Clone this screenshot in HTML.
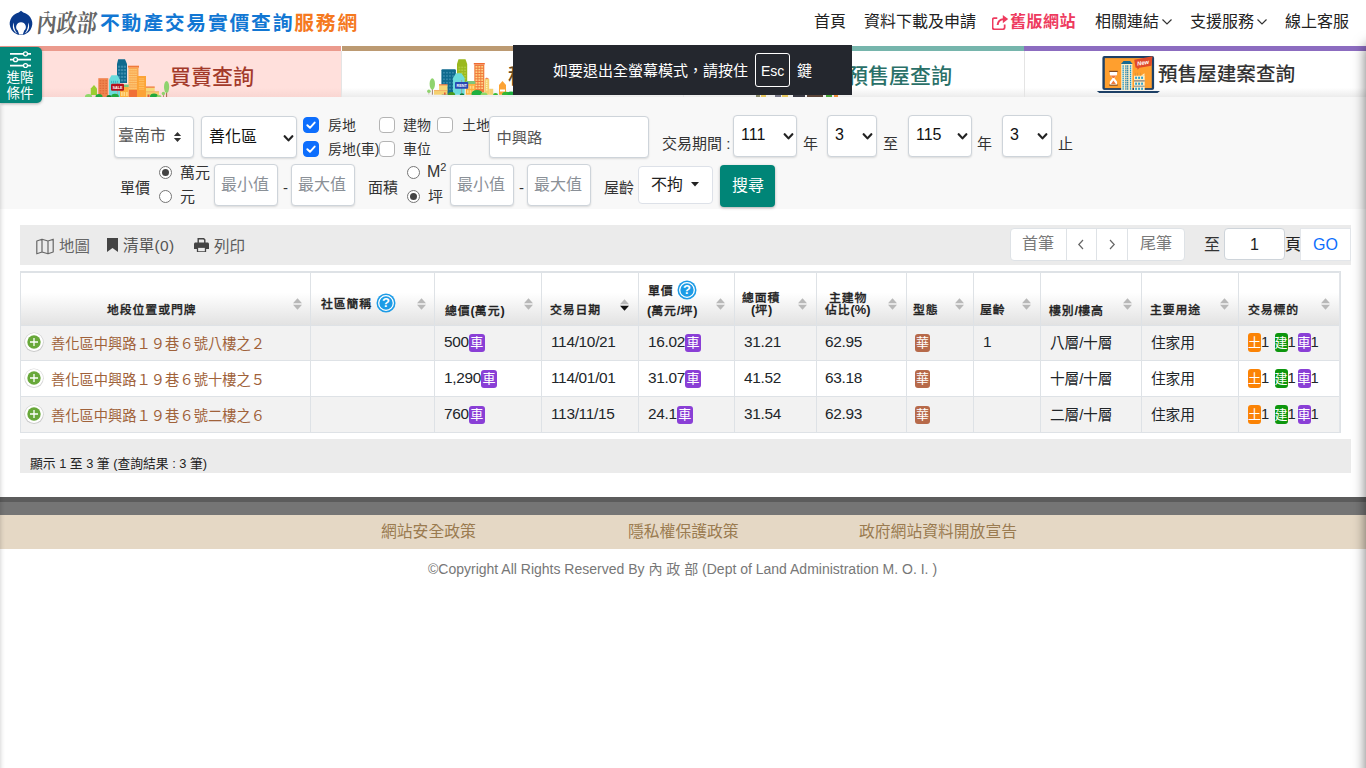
<!DOCTYPE html>
<html lang="zh-Hant">
<head>
<meta charset="utf-8">
<title>內政部不動產交易實價查詢服務網</title>
<style>
*{box-sizing:border-box;margin:0;padding:0}
html,body{width:1366px;height:768px;overflow:hidden;background:#fff}
body{font-family:"Liberation Sans","Noto Sans CJK TC",sans-serif;font-size:16px;color:#212529;position:relative}
.abs{position:absolute}
.t{position:absolute;white-space:nowrap;line-height:1}
/* header */
#hdr{position:absolute;left:0;top:0;width:1366px;height:45px;background:#fff}
#title{left:100px;top:14.400px;font-size:19.800px;font-weight:bold;color:#1277d3;letter-spacing:1.800px}
#title b{color:#f5791f;font-weight:700}
#moi{left:37px;top:12.500px;font-family:"Liberation Serif","Noto Serif CJK TC","Noto Serif CJK SC",serif;font-size:20px;color:#666;font-weight:700;letter-spacing:0;transform:skewX(-6deg) scaleY(1.25);transform-origin:0 50%}
.nav{top:14px;font-size:16px;color:#222}
/* tabs */
.tab{position:absolute;top:46px;height:51px;border-top:5px solid #000;background:linear-gradient(#fff 0,#fff 80%,#ececec 100%)}
.tab .lbl{position:absolute;white-space:nowrap;line-height:1;font-size:21px;font-weight:500}
/* form */
#formbg{position:absolute;left:0;top:97px;width:1366px;height:111.500px;background:#f8f8f8}
.ctl{position:absolute;background:#fff;border:1px solid #ced4da;border-radius:4px;box-shadow:0 1px 2px rgba(0,0,0,.12)}
.ph{position:absolute;white-space:nowrap;line-height:1;color:#8a9097;font-size:16px}
.lab{position:absolute;white-space:nowrap;line-height:1;font-size:15px;color:#333}
.cb{position:absolute;width:16px;height:16px;border-radius:4px;border:1px solid #b4b4b4;background:#fff}
.cb.on{background:#0d6efd;border-color:#0d6efd}
.rd{position:absolute;width:13px;height:13px;border-radius:50%;border:1px solid #767676;background:#fff}
.rd.on::after{content:"";position:absolute;left:2px;top:2px;width:7px;height:7px;border-radius:50%;background:#444}
/* toolbar */
#tbar{position:absolute;left:20px;top:225px;width:1331px;height:40px;background:#ebebeb}
/* table */
.th i{font-style:normal;font-size:12.800px;letter-spacing:0;font-weight:bold;-webkit-text-stroke:0}
.th{position:absolute;white-space:nowrap;line-height:1;font-size:11.900px;letter-spacing:.9px;margin-top:.5px;font-weight:500;-webkit-text-stroke:.3px #222;color:#222}
.td{position:absolute;white-space:nowrap;line-height:1;font-size:14.720px;letter-spacing:-.15px;color:#212529}
.td.num{font-size:15.400px;letter-spacing:-.3px;margin-top:-.6px}
.td.num .bdg{top:-.4px}
.vl{position:absolute;top:272px;width:1px;height:160px;background:#dee2e6}
.bdg{display:inline-block;position:relative;top:-1px;color:#fff;font-size:13px;letter-spacing:0;line-height:18px;height:18px;width:16px;text-align:center;border-radius:3px;vertical-align:0}
.bdg.nb{width:13px;height:19px;line-height:19px;top:-1px;vertical-align:-1px}
</style>
</head>
<body>
<div id="hdr"></div>
<svg class="abs" style="left:8px;top:9px" width="26" height="28" viewBox="8 9 26 28"><path d="M21 10.800 23.300 12.600A11.300 11.300 0 1 1 18.700 12.600z" fill="#0a3a8c"/><path d="M13.800 22.500C11.600 27 13.500 31.500 17.200 33.600 14.800 30.500 13.600 27 13.800 22.500zM28.200 22.500C30.400 27 28.500 31.500 24.800 33.600 27.200 30.500 28.400 27 28.200 22.500z" fill="#fff"/><path d="M21 22.200a4.800 4.800 0 0 1 3.200 8.400L22.800 34.600H19.200L17.800 30.600A4.800 4.800 0 0 1 21 22.200z" fill="#fff"/><path d="M15 33.200 17.500 35.500 14 35.500zM27 33.200 24.500 35.500 28 35.500z" fill="#fff"/></svg>
<div id="moi" class="t">內政部</div>
<div id="title" class="t">不動產交易實價查詢<b>服務網</b></div>
<div class="t nav" style="left:814px">首頁</div>
<div class="t nav" style="left:864px">資料下載及申請</div>
<svg class="abs" style="left:992px;top:13.500px" width="17" height="16" viewBox="1 0.500 14.500 14.500" preserveAspectRatio="none" fill="none" stroke="#ee3a5e" stroke-width="1.500"><path d="M11.800 10v2.800c0 .9-.6 1.500-1.500 1.500H3c-.9 0-1.500-.6-1.500-1.500V5.800c0-.9.600-1.500 1.500-1.500h2.500"/><path d="M5.800 10.500c.2-3.200 2-5.200 5.200-5.400" stroke-width="1.700"/><path d="M10.200 1.300 14.800 5.100 10.200 8.900z" fill="#ee3a5e" stroke="none"/></svg>
<div class="t nav" style="left:1010px;color:#ee3a5e;font-weight:bold;letter-spacing:.5px">舊版網站</div>
<div class="t nav" style="left:1095px">相關連結</div>
<svg class="abs" style="left:1161px;top:18px" width="12" height="8" viewBox="0 0 12 8" fill="none" stroke="#333" stroke-width="1.200"><path d="M1.500 1.500 6 6 10.500 1.500"/></svg>
<div class="t nav" style="left:1190px">支援服務</div>
<svg class="abs" style="left:1256px;top:18px" width="12" height="8" viewBox="0 0 12 8" fill="none" stroke="#333" stroke-width="1.200"><path d="M1.500 1.500 6 6 10.500 1.500"/></svg>
<div class="t nav" style="left:1285px">線上客服</div>

<!-- tabs -->
<div class="tab" style="left:0;width:341px;border-top-color:#eb9a8d;background:linear-gradient(#ffe0dc 0,#ffe0dc 80%,#f9d6d2 100%)"><div class="lbl" style="left:170px;top:15px;color:#a33a2a">買賣查詢</div></div>
<div class="tab" style="left:342px;width:341px;border-top-color:#bc9a72"><div class="lbl" style="left:166px;top:14px;color:#6b4a1c">租賃查詢</div></div>
<div class="tab" style="left:683px;width:341px;border-top-color:#76b5ac"><div class="lbl" style="left:164px;top:14px;color:#2a7068">預售屋查詢</div></div>
<div class="tab" style="left:1024px;width:342px;border-top-color:#8c6cc0"><div class="lbl" style="left:134px;top:14px;color:#333;font-size:19.600px">預售屋建案查詢</div></div>
<div class="abs" style="left:341px;top:51px;width:1px;height:46px;background:#e4e4e4"></div>
<div class="abs" style="left:683px;top:51px;width:1px;height:46px;background:#e4e4e4"></div>
<div class="abs" style="left:1024px;top:51px;width:1px;height:46px;background:#e4e4e4"></div>
<div id="formbg"></div>
<svg class="abs" style="left:84px;top:56px" width="88" height="41" viewBox="84 56 88 41"><path d="M118.200 59.200h6.800l2 4.700V83h-10V63.900z" fill="#0f6a8e"/><rect x="118.0" y="65.7" width="2.2" height="2.0" fill="#3c8cad"/><rect x="118.0" y="69.1" width="2.2" height="2.0" fill="#3c8cad"/><rect x="118.0" y="72.5" width="2.2" height="2.0" fill="#3c8cad"/><rect x="118.0" y="75.9" width="2.2" height="2.0" fill="#3c8cad"/><rect x="118.0" y="79.3" width="2.2" height="2.0" fill="#3c8cad"/><rect x="120.9" y="65.7" width="2.2" height="2.0" fill="#3c8cad"/><rect x="120.9" y="69.1" width="2.2" height="2.0" fill="#3c8cad"/><rect x="120.9" y="72.5" width="2.2" height="2.0" fill="#3c8cad"/><rect x="120.9" y="75.9" width="2.2" height="2.0" fill="#3c8cad"/><rect x="120.9" y="79.3" width="2.2" height="2.0" fill="#3c8cad"/><rect x="123.8" y="65.7" width="2.2" height="2.0" fill="#3c8cad"/><rect x="123.8" y="69.1" width="2.2" height="2.0" fill="#3c8cad"/><rect x="123.8" y="72.5" width="2.2" height="2.0" fill="#3c8cad"/><rect x="123.8" y="75.9" width="2.2" height="2.0" fill="#3c8cad"/><rect x="123.8" y="79.3" width="2.2" height="2.0" fill="#3c8cad"/><rect x="98.3" y="78.2" width="10.0" height="18.8" fill="#f0844f"/><rect x="99.6" y="80.2" width="1.7" height="1.2" fill="#e06a38"/><rect x="99.6" y="82.7" width="1.7" height="1.2" fill="#e06a38"/><rect x="99.6" y="85.2" width="1.7" height="1.2" fill="#e06a38"/><rect x="99.6" y="87.7" width="1.7" height="1.2" fill="#e06a38"/><rect x="99.6" y="90.2" width="1.7" height="1.2" fill="#e06a38"/><rect x="99.6" y="92.7" width="1.7" height="1.2" fill="#e06a38"/><rect x="102.4" y="80.2" width="1.7" height="1.2" fill="#e06a38"/><rect x="102.4" y="82.7" width="1.7" height="1.2" fill="#e06a38"/><rect x="102.4" y="85.2" width="1.7" height="1.2" fill="#e06a38"/><rect x="102.4" y="87.7" width="1.7" height="1.2" fill="#e06a38"/><rect x="102.4" y="90.2" width="1.7" height="1.2" fill="#e06a38"/><rect x="102.4" y="92.7" width="1.7" height="1.2" fill="#e06a38"/><rect x="105.3" y="80.2" width="1.7" height="1.2" fill="#e06a38"/><rect x="105.3" y="82.7" width="1.7" height="1.2" fill="#e06a38"/><rect x="105.3" y="85.2" width="1.7" height="1.2" fill="#e06a38"/><rect x="105.3" y="87.7" width="1.7" height="1.2" fill="#e06a38"/><rect x="105.3" y="90.2" width="1.7" height="1.2" fill="#e06a38"/><rect x="105.3" y="92.7" width="1.7" height="1.2" fill="#e06a38"/><path d="M109 79.500l2.500-4.200h6l2.500 4.200V97h-11z" fill="#6cdcdc"/><rect x="110.9" y="80.8" width="1.2" height="2.5" fill="#3cb8c4"/><rect x="112.9" y="80.8" width="1.2" height="2.5" fill="#3cb8c4"/><rect x="114.9" y="80.8" width="1.2" height="2.5" fill="#3cb8c4"/><rect x="116.9" y="80.8" width="1.2" height="2.5" fill="#3cb8c4"/><rect x="128.0" y="65.7" width="11.0" height="2.0" fill="#f07a3c"/><rect x="128.5" y="67.5" width="10.0" height="8.5" fill="#f9a850"/><rect x="128.5" y="76.0" width="8.5" height="14.0" fill="#f9a850"/><rect x="129.4" y="69.0" width="1.1" height="1.3" fill="#ffd98a"/><rect x="129.4" y="71.3" width="1.1" height="1.3" fill="#ffd98a"/><rect x="129.4" y="73.7" width="1.1" height="1.3" fill="#ffd98a"/><rect x="129.4" y="76.0" width="1.1" height="1.3" fill="#ffd98a"/><rect x="129.4" y="78.3" width="1.1" height="1.3" fill="#ffd98a"/><rect x="129.4" y="80.7" width="1.1" height="1.3" fill="#ffd98a"/><rect x="129.4" y="83.0" width="1.1" height="1.3" fill="#ffd98a"/><rect x="129.4" y="85.4" width="1.1" height="1.3" fill="#ffd98a"/><rect x="129.4" y="87.7" width="1.1" height="1.3" fill="#ffd98a"/><rect x="131.4" y="69.0" width="1.1" height="1.3" fill="#ffd98a"/><rect x="131.4" y="71.3" width="1.1" height="1.3" fill="#ffd98a"/><rect x="131.4" y="73.7" width="1.1" height="1.3" fill="#ffd98a"/><rect x="131.4" y="76.0" width="1.1" height="1.3" fill="#ffd98a"/><rect x="131.4" y="78.3" width="1.1" height="1.3" fill="#ffd98a"/><rect x="131.4" y="80.7" width="1.1" height="1.3" fill="#ffd98a"/><rect x="131.4" y="83.0" width="1.1" height="1.3" fill="#ffd98a"/><rect x="131.4" y="85.4" width="1.1" height="1.3" fill="#ffd98a"/><rect x="131.4" y="87.7" width="1.1" height="1.3" fill="#ffd98a"/><rect x="133.4" y="69.0" width="1.1" height="1.3" fill="#ffd98a"/><rect x="133.4" y="71.3" width="1.1" height="1.3" fill="#ffd98a"/><rect x="133.4" y="73.7" width="1.1" height="1.3" fill="#ffd98a"/><rect x="133.4" y="76.0" width="1.1" height="1.3" fill="#ffd98a"/><rect x="133.4" y="78.3" width="1.1" height="1.3" fill="#ffd98a"/><rect x="133.4" y="80.7" width="1.1" height="1.3" fill="#ffd98a"/><rect x="133.4" y="83.0" width="1.1" height="1.3" fill="#ffd98a"/><rect x="133.4" y="85.4" width="1.1" height="1.3" fill="#ffd98a"/><rect x="133.4" y="87.7" width="1.1" height="1.3" fill="#ffd98a"/><rect x="135.4" y="69.0" width="1.1" height="1.3" fill="#ffd98a"/><rect x="135.4" y="71.3" width="1.1" height="1.3" fill="#ffd98a"/><rect x="135.4" y="73.7" width="1.1" height="1.3" fill="#ffd98a"/><rect x="135.4" y="76.0" width="1.1" height="1.3" fill="#ffd98a"/><rect x="135.4" y="78.3" width="1.1" height="1.3" fill="#ffd98a"/><rect x="135.4" y="80.7" width="1.1" height="1.3" fill="#ffd98a"/><rect x="135.4" y="83.0" width="1.1" height="1.3" fill="#ffd98a"/><rect x="135.4" y="85.4" width="1.1" height="1.3" fill="#ffd98a"/><rect x="135.4" y="87.7" width="1.1" height="1.3" fill="#ffd98a"/><rect x="128.7" y="90.0" width="8.3" height="7.0" fill="#f07038"/><rect x="137.0" y="76.0" width="9.0" height="21.0" fill="#fca336"/><rect x="138.8" y="78.5" width="5.5" height="0.8" fill="#ffc46a"/><rect x="138.8" y="80.2" width="5.5" height="0.8" fill="#ffc46a"/><rect x="138.8" y="81.9" width="5.5" height="0.8" fill="#ffc46a"/><rect x="138.8" y="83.6" width="5.5" height="0.8" fill="#ffc46a"/><rect x="138.8" y="85.3" width="5.5" height="0.8" fill="#ffc46a"/><rect x="138.8" y="87.0" width="5.5" height="0.8" fill="#ffc46a"/><rect x="138.8" y="88.7" width="5.5" height="0.8" fill="#ffc46a"/><rect x="120.0" y="84.5" width="8.7" height="2.5" fill="#7cc67c"/><rect x="120.0" y="87.0" width="8.7" height="10.0" fill="#fcb040"/><rect x="121.0" y="92.0" width="1.6" height="4.0" fill="#ffd98a"/><rect x="123.5" y="92.0" width="1.6" height="4.0" fill="#ffd98a"/><rect x="126.1" y="92.0" width="1.6" height="4.0" fill="#ffd98a"/><rect x="146.0" y="86.6" width="8.7" height="10.4" fill="#f5d878"/><rect x="146.0" y="86.6" width="8.7" height="1.0" fill="#f2603c"/><rect x="146.0" y="91.5" width="13.0" height="5.5" fill="#f5d070"/><rect x="146.0" y="91.5" width="13.0" height="0.7" fill="#f0a060"/><rect x="147.5" y="94.5" width="2.0" height="2.5" fill="#e05a3c"/><rect x="117.2" y="82.5" width="0.8" height="14.5" fill="#aaa"/><rect x="111.0" y="83.7" width="13.0" height="7.0" fill="#b5101c" rx="1.200"/><text x="117.500" y="88.600" font-size="3.800" font-weight="bold" fill="#fff" text-anchor="middle" font-family="Liberation Sans,sans-serif">SALE</text><path d="M94 85l3 3.500V95h-6.200V88.500z" fill="#9acd32"/><ellipse cx="88.5" cy="96.5" rx="3.5" ry="2.6" fill="#8ed86a"/><ellipse cx="99.0" cy="96.5" rx="3.5" ry="2.6" fill="#22a83c"/><ellipse cx="109.0" cy="97.0" rx="2.5" ry="1.9" fill="#1a7a2a"/><ellipse cx="115.0" cy="96.5" rx="3.8" ry="2.8" fill="#22a83c"/><ellipse cx="154.0" cy="96.5" rx="4.0" ry="3.0" fill="#22a83c"/><ellipse cx="159.0" cy="97.0" rx="2.5" ry="1.9" fill="#8ed86a"/><rect x="166.2" y="88.0" width="0.9" height="9.0" fill="#9a5a3a"/><ellipse cx="166.600" cy="87" rx="2.600" ry="6" fill="#8fd36e"/><rect x="163.1" y="94.0" width="0.6" height="3.0" fill="#9a5a3a"/><circle cx="163.400" cy="93.500" r="1.700" fill="#8fd36e"/></svg>
<svg class="abs" style="left:426px;top:56px" width="87" height="39" viewBox="426 56 87 39"><path d="M458.500 59.200h7l1.700 4.800V82h-10.200V64z" fill="#9ab81e"/><rect x="458.4" y="66.6" width="2.0" height="1.6" fill="#aecb3c"/><rect x="458.4" y="69.4" width="2.0" height="1.6" fill="#aecb3c"/><rect x="458.4" y="72.2" width="2.0" height="1.6" fill="#aecb3c"/><rect x="458.4" y="75.0" width="2.0" height="1.6" fill="#aecb3c"/><rect x="458.4" y="77.8" width="2.0" height="1.6" fill="#aecb3c"/><rect x="461.2" y="66.6" width="2.0" height="1.6" fill="#aecb3c"/><rect x="461.2" y="69.4" width="2.0" height="1.6" fill="#aecb3c"/><rect x="461.2" y="72.2" width="2.0" height="1.6" fill="#aecb3c"/><rect x="461.2" y="75.0" width="2.0" height="1.6" fill="#aecb3c"/><rect x="461.2" y="77.8" width="2.0" height="1.6" fill="#aecb3c"/><rect x="464.1" y="66.6" width="2.0" height="1.6" fill="#aecb3c"/><rect x="464.1" y="69.4" width="2.0" height="1.6" fill="#aecb3c"/><rect x="464.1" y="72.2" width="2.0" height="1.6" fill="#aecb3c"/><rect x="464.1" y="75.0" width="2.0" height="1.6" fill="#aecb3c"/><rect x="464.1" y="77.8" width="2.0" height="1.6" fill="#aecb3c"/><rect x="441.4" y="69.2" width="14.5" height="25.5" fill="#0f6a8e" rx="1"/><rect x="443.1" y="71.9" width="1.7" height="1.6" fill="#3c8cad"/><rect x="443.1" y="75.2" width="1.7" height="1.6" fill="#3c8cad"/><rect x="443.1" y="78.5" width="1.7" height="1.6" fill="#3c8cad"/><rect x="443.1" y="81.9" width="1.7" height="1.6" fill="#3c8cad"/><rect x="443.1" y="85.2" width="1.7" height="1.6" fill="#3c8cad"/><rect x="443.1" y="88.5" width="1.7" height="1.6" fill="#3c8cad"/><rect x="446.1" y="71.9" width="1.7" height="1.6" fill="#3c8cad"/><rect x="446.1" y="75.2" width="1.7" height="1.6" fill="#3c8cad"/><rect x="446.1" y="78.5" width="1.7" height="1.6" fill="#3c8cad"/><rect x="446.1" y="81.9" width="1.7" height="1.6" fill="#3c8cad"/><rect x="446.1" y="85.2" width="1.7" height="1.6" fill="#3c8cad"/><rect x="446.1" y="88.5" width="1.7" height="1.6" fill="#3c8cad"/><rect x="449.1" y="71.9" width="1.7" height="1.6" fill="#3c8cad"/><rect x="449.1" y="75.2" width="1.7" height="1.6" fill="#3c8cad"/><rect x="449.1" y="78.5" width="1.7" height="1.6" fill="#3c8cad"/><rect x="449.1" y="81.9" width="1.7" height="1.6" fill="#3c8cad"/><rect x="449.1" y="85.2" width="1.7" height="1.6" fill="#3c8cad"/><rect x="449.1" y="88.5" width="1.7" height="1.6" fill="#3c8cad"/><rect x="452.1" y="71.9" width="1.7" height="1.6" fill="#3c8cad"/><rect x="452.1" y="75.2" width="1.7" height="1.6" fill="#3c8cad"/><rect x="452.1" y="78.5" width="1.7" height="1.6" fill="#3c8cad"/><rect x="452.1" y="81.9" width="1.7" height="1.6" fill="#3c8cad"/><rect x="452.1" y="85.2" width="1.7" height="1.6" fill="#3c8cad"/><rect x="452.1" y="88.5" width="1.7" height="1.6" fill="#3c8cad"/><path d="M453 78l3-4.700h5.500l3.200 4.700V94.700H453z" fill="#6cdcdc"/><rect x="473.8" y="63.0" width="11.0" height="1.5" fill="#f06a30"/><rect x="474.3" y="64.5" width="10.0" height="28.0" fill="#f07a3c"/><rect x="475.5" y="66.1" width="1.9" height="1.5" fill="#ffd98a"/><rect x="475.5" y="68.8" width="1.9" height="1.5" fill="#ffd98a"/><rect x="475.5" y="71.4" width="1.9" height="1.5" fill="#ffd98a"/><rect x="475.5" y="74.1" width="1.9" height="1.5" fill="#ffd98a"/><rect x="475.5" y="76.8" width="1.9" height="1.5" fill="#ffd98a"/><rect x="475.5" y="79.4" width="1.9" height="1.5" fill="#ffd98a"/><rect x="475.5" y="82.1" width="1.9" height="1.5" fill="#ffd98a"/><rect x="475.5" y="84.7" width="1.9" height="1.5" fill="#ffd98a"/><rect x="475.5" y="87.4" width="1.9" height="1.5" fill="#ffd98a"/><rect x="478.4" y="66.1" width="1.9" height="1.5" fill="#ffd98a"/><rect x="478.4" y="68.8" width="1.9" height="1.5" fill="#ffd98a"/><rect x="478.4" y="71.4" width="1.9" height="1.5" fill="#ffd98a"/><rect x="478.4" y="74.1" width="1.9" height="1.5" fill="#ffd98a"/><rect x="478.4" y="76.8" width="1.9" height="1.5" fill="#ffd98a"/><rect x="478.4" y="79.4" width="1.9" height="1.5" fill="#ffd98a"/><rect x="478.4" y="82.1" width="1.9" height="1.5" fill="#ffd98a"/><rect x="478.4" y="84.7" width="1.9" height="1.5" fill="#ffd98a"/><rect x="478.4" y="87.4" width="1.9" height="1.5" fill="#ffd98a"/><rect x="481.2" y="66.1" width="1.9" height="1.5" fill="#ffd98a"/><rect x="481.2" y="68.8" width="1.9" height="1.5" fill="#ffd98a"/><rect x="481.2" y="71.4" width="1.9" height="1.5" fill="#ffd98a"/><rect x="481.2" y="74.1" width="1.9" height="1.5" fill="#ffd98a"/><rect x="481.2" y="76.8" width="1.9" height="1.5" fill="#ffd98a"/><rect x="481.2" y="79.4" width="1.9" height="1.5" fill="#ffd98a"/><rect x="481.2" y="82.1" width="1.9" height="1.5" fill="#ffd98a"/><rect x="481.2" y="84.7" width="1.9" height="1.5" fill="#ffd98a"/><rect x="481.2" y="87.4" width="1.9" height="1.5" fill="#ffd98a"/><rect x="465.8" y="81.0" width="9.5" height="3.0" fill="#7cc67c"/><rect x="465.8" y="84.0" width="9.5" height="10.7" fill="#fcb040"/><rect x="467.0" y="85.8" width="1.6" height="3.0" fill="#ffd98a"/><rect x="467.0" y="90.2" width="1.6" height="3.0" fill="#ffd98a"/><rect x="469.7" y="85.8" width="1.6" height="3.0" fill="#ffd98a"/><rect x="469.7" y="90.2" width="1.6" height="3.0" fill="#ffd98a"/><rect x="472.4" y="85.8" width="1.6" height="3.0" fill="#ffd98a"/><rect x="472.4" y="90.2" width="1.6" height="3.0" fill="#ffd98a"/><rect x="484.5" y="79.0" width="4.7" height="15.7" fill="#f5d070"/><path d="M484.500 79l2.300-1.500 2.400 1.500z" fill="#f0844f"/><rect x="486.1" y="80.5" width="1.3" height="1.3" fill="#fff3c0"/><rect x="486.1" y="82.7" width="1.3" height="1.3" fill="#fff3c0"/><rect x="486.1" y="84.9" width="1.3" height="1.3" fill="#fff3c0"/><rect x="486.1" y="87.0" width="1.3" height="1.3" fill="#fff3c0"/><rect x="486.1" y="89.2" width="1.3" height="1.3" fill="#fff3c0"/><rect x="489.2" y="88.8" width="4.0" height="6.0" fill="#f5d070"/><rect x="434.0" y="90.0" width="13.5" height="4.7" fill="#f5d070"/><rect x="439.0" y="84.4" width="8.5" height="5.6" fill="#f5d878"/><rect x="439.0" y="84.4" width="8.5" height="0.9" fill="#f2603c"/><rect x="434.0" y="90.0" width="13.5" height="0.6" fill="#f0a060"/><rect x="444.0" y="92.5" width="1.6" height="2.2" fill="#e05a3c"/><path d="M499 85l3.500-4 3.500 4v9.700h-7z" fill="#fca336"/><rect x="500.0" y="89.5" width="5.0" height="2.0" fill="#fff"/><rect x="461.3" y="80.0" width="0.8" height="14.5" fill="#999"/><rect x="455.0" y="82.0" width="13.2" height="6.8" fill="#2a4ab4" rx=".8"/><text x="461.600" y="86.800" font-size="3.800" font-weight="bold" fill="#fff" text-anchor="middle" font-family="Liberation Sans,sans-serif">RENT</text><ellipse cx="451.5" cy="94.5" rx="3.5" ry="2.6" fill="#4a9a1a"/><ellipse cx="462.0" cy="95.0" rx="2.3" ry="1.7" fill="#0a7a3a"/><ellipse cx="477.0" cy="94.0" rx="5.5" ry="4.1" fill="#1fb040"/><ellipse cx="484.0" cy="95.0" rx="3.5" ry="2.6" fill="#8ed86a"/><ellipse cx="495.5" cy="95.0" rx="2.5" ry="1.9" fill="#35b835"/><ellipse cx="506.0" cy="94.8" rx="4.0" ry="3.0" fill="#35b835"/><ellipse cx="511.0" cy="94.0" rx="3.5" ry="2.6" fill="#1fb040"/><rect x="431.9" y="85.0" width="0.9" height="9.7" fill="#9a7060"/><ellipse cx="432.300" cy="84" rx="2.700" ry="5.800" fill="#8fd36e"/><rect x="428.6" y="92.0" width="0.6" height="2.5" fill="#c0a0a0"/><circle cx="428.900" cy="91.300" r="1.800" fill="#8fd36e"/></svg>
<svg class="abs" style="left:1096px;top:55px" width="66" height="40" viewBox="1096 55 66 40"><rect x="1102.4" y="55.9" width="51.7" height="34.0" fill="#1d4066" rx="2"/><rect x="1104.8" y="58.1" width="47.0" height="30.0" fill="#ff9f2e"/><path d="M1096.800 90.900h63.200l-2.500 2.200h-58.200z" fill="#1d4066"/><rect x="1100.0" y="89.9" width="57.0" height="1.0" fill="#f4f4f4"/><path d="M1121 64l2.500-3h6.600l2.500 3z" fill="#1a6a90"/><rect x="1121.2" y="64.0" width="11.2" height="26.4" fill="#fdeec8"/><rect x="1122.5" y="65.3" width="1.3" height="1.5" fill="#1a9ad0"/><rect x="1122.5" y="67.4" width="1.3" height="1.5" fill="#1a9ad0"/><rect x="1122.5" y="69.5" width="1.3" height="1.5" fill="#1a9ad0"/><rect x="1122.5" y="71.5" width="1.3" height="1.5" fill="#1a9ad0"/><rect x="1122.5" y="73.6" width="1.3" height="1.5" fill="#1a9ad0"/><rect x="1122.5" y="75.7" width="1.3" height="1.5" fill="#1a9ad0"/><rect x="1122.5" y="77.8" width="1.3" height="1.5" fill="#1a9ad0"/><rect x="1122.5" y="79.9" width="1.3" height="1.5" fill="#1a9ad0"/><rect x="1122.5" y="82.0" width="1.3" height="1.5" fill="#1a9ad0"/><rect x="1122.5" y="84.0" width="1.3" height="1.5" fill="#1a9ad0"/><rect x="1122.5" y="86.1" width="1.3" height="1.5" fill="#1a9ad0"/><rect x="1122.5" y="88.2" width="1.3" height="1.5" fill="#1a9ad0"/><rect x="1125.3" y="65.3" width="1.2" height="1.5" fill="#1a7aa8"/><rect x="1125.3" y="67.4" width="1.2" height="1.5" fill="#1a7aa8"/><rect x="1125.3" y="69.5" width="1.2" height="1.5" fill="#1a7aa8"/><rect x="1125.3" y="71.5" width="1.2" height="1.5" fill="#1a7aa8"/><rect x="1125.3" y="73.6" width="1.2" height="1.5" fill="#1a7aa8"/><rect x="1125.3" y="75.7" width="1.2" height="1.5" fill="#1a7aa8"/><rect x="1125.3" y="77.8" width="1.2" height="1.5" fill="#1a7aa8"/><rect x="1125.3" y="79.9" width="1.2" height="1.5" fill="#1a7aa8"/><rect x="1125.3" y="82.0" width="1.2" height="1.5" fill="#1a7aa8"/><rect x="1125.3" y="84.0" width="1.2" height="1.5" fill="#1a7aa8"/><rect x="1125.3" y="86.1" width="1.2" height="1.5" fill="#1a7aa8"/><rect x="1125.3" y="88.2" width="1.2" height="1.5" fill="#1a7aa8"/><rect x="1127.1" y="65.3" width="1.2" height="1.5" fill="#1a7aa8"/><rect x="1127.1" y="67.4" width="1.2" height="1.5" fill="#1a7aa8"/><rect x="1127.1" y="69.5" width="1.2" height="1.5" fill="#1a7aa8"/><rect x="1127.1" y="71.5" width="1.2" height="1.5" fill="#1a7aa8"/><rect x="1127.1" y="73.6" width="1.2" height="1.5" fill="#1a7aa8"/><rect x="1127.1" y="75.7" width="1.2" height="1.5" fill="#1a7aa8"/><rect x="1127.1" y="77.8" width="1.2" height="1.5" fill="#1a7aa8"/><rect x="1127.1" y="79.9" width="1.2" height="1.5" fill="#1a7aa8"/><rect x="1127.1" y="82.0" width="1.2" height="1.5" fill="#1a7aa8"/><rect x="1127.1" y="84.0" width="1.2" height="1.5" fill="#1a7aa8"/><rect x="1127.1" y="86.1" width="1.2" height="1.5" fill="#1a7aa8"/><rect x="1127.1" y="88.2" width="1.2" height="1.5" fill="#1a7aa8"/><rect x="1129.9" y="65.3" width="1.3" height="1.5" fill="#1a9ad0"/><rect x="1129.9" y="67.4" width="1.3" height="1.5" fill="#1a9ad0"/><rect x="1129.9" y="69.5" width="1.3" height="1.5" fill="#1a9ad0"/><rect x="1129.9" y="71.5" width="1.3" height="1.5" fill="#1a9ad0"/><rect x="1129.9" y="73.6" width="1.3" height="1.5" fill="#1a9ad0"/><rect x="1129.9" y="75.7" width="1.3" height="1.5" fill="#1a9ad0"/><rect x="1129.9" y="77.8" width="1.3" height="1.5" fill="#1a9ad0"/><rect x="1129.9" y="79.9" width="1.3" height="1.5" fill="#1a9ad0"/><rect x="1129.9" y="82.0" width="1.3" height="1.5" fill="#1a9ad0"/><rect x="1129.9" y="84.0" width="1.3" height="1.5" fill="#1a9ad0"/><rect x="1129.9" y="86.1" width="1.3" height="1.5" fill="#1a9ad0"/><rect x="1129.9" y="88.2" width="1.3" height="1.5" fill="#1a9ad0"/><rect x="1134.0" y="75.7" width="10.7" height="14.7" fill="#fdeec8"/><rect x="1135.2" y="76.7" width="1.7" height="2.2" fill="#1a9ad0"/><rect x="1138.2" y="76.7" width="1.7" height="2.2" fill="#1a9ad0"/><rect x="1141.2" y="76.7" width="1.7" height="2.2" fill="#1a9ad0"/><rect x="1134.0" y="80.3" width="10.7" height="1.2" fill="#777"/><rect x="1135.2" y="82.6" width="1.7" height="2.2" fill="#1a9ad0"/><rect x="1138.2" y="82.6" width="1.7" height="2.2" fill="#1a9ad0"/><rect x="1141.2" y="82.6" width="1.7" height="2.2" fill="#1a9ad0"/><rect x="1134.0" y="85.7" width="10.7" height="1.0" fill="#888"/><rect x="1135.2" y="87.7" width="1.7" height="2.2" fill="#1a9ad0"/><rect x="1138.2" y="87.7" width="1.7" height="2.2" fill="#1a9ad0"/><rect x="1141.2" y="87.7" width="1.7" height="2.2" fill="#1a9ad0"/><rect x="1135.0" y="72.8" width="0.5" height="3.0" fill="#c88a3a"/><rect x="1137.5" y="72.8" width="0.5" height="3.0" fill="#c88a3a"/><rect x="1140.0" y="72.8" width="0.5" height="3.0" fill="#c88a3a"/><path d="M1141 75.700l3.500-2.500v2.500z" fill="#fdeec8"/><rect x="1109.2" y="70.8" width="8.5" height="1.3" fill="#7a4a2a"/><rect x="1109.2" y="84.4" width="8.5" height="1.3" fill="#7a4a2a"/><path d="M1109.800 72.100h7.300v2.500l-2.600 3.600 2.600 3.600v2.600h-7.300v-2.600l2.600-3.600-2.600-3.600z" fill="#fff"/><path d="M1110.300 75.500h6.300l-2.400 2.500h-1.500zM1111 84l2.400-3.500 2.500 3.500z" fill="#f07a3c"/><path d="M1134.200 65.600l18.300-3.600-1 9.500-12 2-1.800 2-.5-1.800-1.700-.3z" fill="#e04a2a" transform="translate(0,-5.800)"/><text x="1143.300" y="64.800" font-size="5.800" font-weight="bold" font-style="italic" fill="#fff" text-anchor="middle" transform="rotate(-10 1143.300 64)" font-family="Liberation Sans,sans-serif">New</text></svg>

<div class="abs" style="left:0;top:47px;width:42px;height:56px;background:#04877a;border-radius:0 5px 5px 0;box-shadow:0 1px 3px rgba(0,0,0,.3)"></div>
<svg class="abs" style="left:10px;top:50px" width="22" height="18" viewBox="0 0 22 18" fill="none" stroke="#fff" stroke-width="1.700"><path d="M0 3.800h13.300M17.700 3.800H21M0 9.700h3.300M7.700 9.700H21M0 15.600h13.300M17.700 15.600H21"/><circle cx="15.500" cy="3.800" r="2" stroke-width="1.300"/><circle cx="5.500" cy="9.700" r="2" stroke-width="1.300"/><circle cx="15.500" cy="15.600" r="2" stroke-width="1.300"/></svg>
<div class="t" style="left:6.500px;top:70px;font-size:13.500px;color:#fff;line-height:15.500px;white-space:normal;width:30px">進階條件</div>
<svg class="abs" style="left:755px;top:95px" width="86" height="2" viewBox="0 0 86 2"><rect x="1" width="4" height="2" fill="#8a8a6a"/><rect x="6" width="5" height="2" fill="#e8c860"/><rect x="20" width="6" height="2" fill="#7a7a8a"/><rect x="27" width="6" height="2" fill="#e8c860"/><rect x="38" width="12" height="2" fill="#3a3a44"/><rect x="52" width="16" height="2" fill="#5a4438"/><rect x="71" width="6" height="2" fill="#4aa83a"/><rect x="79" width="4" height="2" fill="#f0903a"/></svg>
<div class="abs" style="left:513px;top:45px;width:339px;height:50px;background:#24272e"></div>
<div class="t" style="left:553px;top:63px;font-size:15px;color:#fff">如要退出全螢幕模式，請按住</div>
<div class="abs" style="left:755px;top:53px;width:35px;height:34px;border:1px solid #fff;border-radius:3px"></div>
<div class="t" style="left:761px;top:63.500px;font-size:14px;color:#fff">Esc</div>
<div class="t" style="left:797px;top:63px;font-size:15px;color:#fff">鍵</div>

<!-- form row 1 -->
<div class="ctl" style="left:114px;top:116px;width:80px;height:42px"></div>
<div class="t" style="left:118px;top:128px;font-size:16px;color:#555">臺南市</div>
<svg class="abs" style="left:172.500px;top:131px" width="9" height="12" viewBox="0 0 8 12" preserveAspectRatio="none" fill="#333"><path d="M4 1 7.200 5H.8zM4 11 .8 7h6.400z"/></svg>
<div class="ctl" style="left:201px;top:116px;width:96px;height:42px"></div>
<div class="t" style="left:209px;top:129px;font-size:16px;color:#111">善化區</div>
<svg class="abs" style="left:282.500px;top:133.500px" width="11" height="8.800" viewBox="0 0 10 8" fill="none" stroke="#222" stroke-width="2" stroke-linecap="round" stroke-linejoin="round"><path d="M1.500 2 5 5.800 8.500 2"/></svg>
<div class="cb on" style="left:303px;top:117px"><svg viewBox="0 0 16 16" width="14" height="14" style="position:absolute;left:0;top:0" fill="none" stroke="#fff" stroke-width="2.200" stroke-linecap="round" stroke-linejoin="round"><path d="M3.800 8.300 6.800 11.200 12.200 5.200"/></svg></div>
<div class="lab" style="left:328px;top:118px;font-size:14px">房地</div>
<div class="cb" style="left:379px;top:117px"></div>
<div class="lab" style="left:403px;top:118px;font-size:14px">建物</div>
<div class="cb" style="left:437px;top:117px"></div>
<div class="lab" style="left:462px;top:118px;font-size:14px">土地</div>
<div class="cb on" style="left:303px;top:141px"><svg viewBox="0 0 16 16" width="14" height="14" style="position:absolute;left:0;top:0" fill="none" stroke="#fff" stroke-width="2.200" stroke-linecap="round" stroke-linejoin="round"><path d="M3.800 8.300 6.800 11.200 12.200 5.200"/></svg></div>
<div class="lab" style="left:328px;top:142px;font-size:14px">房地(車)</div>
<div class="cb" style="left:379px;top:141px"></div>
<div class="lab" style="left:403px;top:142px;font-size:14px">車位</div>
<div class="ctl" style="left:489px;top:116px;width:160px;height:42px"></div>
<div class="t" style="left:496.500px;top:130px;font-size:15.300px;color:#555">中興路</div>
<div class="lab" style="left:662px;top:136px">交易期間 :</div>
<div class="ctl" style="left:733px;top:115px;width:64px;height:42px"></div>
<div class="t" style="left:741px;top:127px;font-size:16px;color:#111">111</div>
<svg class="abs" style="left:782.5px;top:132px" width="11" height="8.800" viewBox="0 0 10 8" fill="none" stroke="#222" stroke-width="2" stroke-linecap="round" stroke-linejoin="round"><path d="M1.500 2 5 5.800 8.500 2"/></svg>
<div class="lab" style="left:803px;top:136px">年</div>
<div class="ctl" style="left:827px;top:115px;width:50px;height:42px"></div>
<div class="t" style="left:835px;top:127px;font-size:16px;color:#111">3</div>
<svg class="abs" style="left:861.5px;top:132px" width="11" height="8.800" viewBox="0 0 10 8" fill="none" stroke="#222" stroke-width="2" stroke-linecap="round" stroke-linejoin="round"><path d="M1.500 2 5 5.800 8.500 2"/></svg>
<div class="lab" style="left:883px;top:136px">至</div>
<div class="ctl" style="left:908px;top:115px;width:64px;height:42px"></div>
<div class="t" style="left:916px;top:127px;font-size:16px;color:#111">115</div>
<svg class="abs" style="left:956.5px;top:132px" width="11" height="8.800" viewBox="0 0 10 8" fill="none" stroke="#222" stroke-width="2" stroke-linecap="round" stroke-linejoin="round"><path d="M1.500 2 5 5.800 8.500 2"/></svg>
<div class="lab" style="left:977px;top:136px">年</div>
<div class="ctl" style="left:1002px;top:115px;width:50px;height:42px"></div>
<div class="t" style="left:1010px;top:127px;font-size:16px;color:#111">3</div>
<svg class="abs" style="left:1036.5px;top:132px" width="11" height="8.800" viewBox="0 0 10 8" fill="none" stroke="#222" stroke-width="2" stroke-linecap="round" stroke-linejoin="round"><path d="M1.500 2 5 5.800 8.500 2"/></svg>
<div class="lab" style="left:1058px;top:136px">止</div>
<!-- form row 2 -->
<div class="lab" style="left:120px;top:180px">單價</div>
<div class="rd on" style="left:159px;top:166px"></div>
<div class="lab" style="left:180px;top:165px">萬元</div>
<div class="rd" style="left:159px;top:190px"></div>
<div class="lab" style="left:180px;top:189px">元</div>
<div class="ctl" style="left:214px;top:164px;width:64px;height:42px"></div>
<div class="ph" style="left:221px;top:177px">最小值</div>
<div class="lab" style="left:283px;top:180px">-</div>
<div class="ctl" style="left:291px;top:164px;width:64px;height:42px"></div>
<div class="ph" style="left:298px;top:177px">最大值</div>
<div class="lab" style="left:368px;top:180px">面積</div>
<div class="rd" style="left:407px;top:166px"></div>
<div class="lab" style="left:427px;top:164px;font-size:16px">M<sup style="font-size:11px;vertical-align:6px;line-height:0">2</sup></div>
<div class="rd on" style="left:407px;top:190px"></div>
<div class="lab" style="left:428px;top:189px">坪</div>
<div class="ctl" style="left:450px;top:164px;width:64px;height:42px"></div>
<div class="ph" style="left:457px;top:177px">最小值</div>
<div class="lab" style="left:519px;top:180px">-</div>
<div class="ctl" style="left:527px;top:164px;width:64px;height:42px"></div>
<div class="ph" style="left:534px;top:177px">最大值</div>
<div class="lab" style="left:604px;top:180px">屋齡</div>
<div class="ctl" style="left:638px;top:166px;width:75px;height:37.500px;border-color:#dde1e8;box-shadow:none"></div>
<div class="t" style="left:651px;top:177px;font-size:16px;color:#222">不拘</div>
<svg class="abs" style="left:691px;top:182px" width="8" height="5" viewBox="0 0 8 5" fill="#222"><path d="M0 0h8L4 4.500z"/></svg>
<div class="abs" style="left:720px;top:165px;width:55px;height:42px;background:#008577;border-radius:4px;box-shadow:0 1px 3px rgba(0,0,0,.3)"></div>
<div class="t" style="left:732px;top:178px;font-size:16px;color:#fff">搜尋</div>

<div id="tbar"></div>
<svg class="abs" style="left:36px;top:238px" width="18" height="17" viewBox="0 0 18 17" fill="none" stroke="#666" stroke-width="1.2" stroke-linejoin="round"><path d="M.8 3 6 1.200 12 3 17.200 1.200V14L12 15.800 6 14 .8 15.800zM6 1.200V14M12 3v12.800"/></svg>
<div class="t" style="left:59px;top:238.500px;font-size:15.500px;color:#666">地圖</div>
<svg class="abs" style="left:107px;top:238px" width="11" height="14" viewBox="0 0 11 14" fill="#444"><path d="M0 0h11v14L5.500 10 0 14z"/></svg>
<div class="t" style="left:123px;top:238px;font-size:15.500px;color:#555;letter-spacing:.3px">清單(0)</div>
<svg class="abs" style="left:194px;top:238px" width="15" height="14" viewBox="0 0 15 14"><path d="M3.500 0h6.500l1.500 1.500V5h-1.400V2.200L9.400 1.400H4.900V5H3.500z" fill="#444"/><path d="M1.500 4.500h12c.8 0 1.500.7 1.500 1.500v5h-3.200v-1.500H3.200V11H0V6c0-.8.700-1.500 1.500-1.500z" fill="#444"/><path d="M3.500 9h8v5h-8z" fill="none" stroke="#444" stroke-width="1.300"/></svg>
<div class="t" style="left:214px;top:238.500px;font-size:15.500px;color:#5c5c5c">列印</div>
<div class="abs" style="left:1010px;top:227.500px;width:175px;height:33px;background:#fff;border:1px solid #dee2e6;border-radius:4px"></div>
<div class="abs" style="left:1066px;top:228px;width:1px;height:32px;background:#dee2e6"></div>
<div class="abs" style="left:1096px;top:228px;width:1px;height:32px;background:#dee2e6"></div>
<div class="abs" style="left:1127px;top:228px;width:1px;height:32px;background:#dee2e6"></div>
<div class="t" style="left:1022px;top:236px;font-size:16px;color:#7a7a7a">首筆</div>
<div class="t" style="left:1140px;top:236px;font-size:16px;color:#7a7a7a">尾筆</div>
<svg class="abs" style="left:1077px;top:239px" width="8" height="11" viewBox="0 0 8 11" fill="none" stroke="#666" stroke-width="1.2"><path d="M6 1 1.800 5.500 6 10"/></svg>
<svg class="abs" style="left:1108px;top:239px" width="8" height="11" viewBox="0 0 8 11" fill="none" stroke="#666" stroke-width="1.2"><path d="M2 1 6.200 5.500 2 10"/></svg>
<div class="t" style="left:1204px;top:237px;font-size:16px;color:#333">至</div>
<div class="abs" style="left:1224px;top:228px;width:61px;height:32px;background:#fff;border:1px solid #ced4da;border-radius:4px"></div>
<div class="t" style="left:1250px;top:237px;font-size:16px;color:#222">1</div>
<div class="t" style="left:1285px;top:237px;font-size:16px;color:#222">頁</div>
<div class="abs" style="left:1300px;top:228px;width:51px;height:33px;background:#fff;border:1px solid #e3e6ea"></div>
<div class="t" style="left:1313px;top:237px;font-size:16px;color:#0d6efd">GO</div>

<div class="abs" style="left:20px;top:271px;width:1320.500px;height:162px;background:#fff;border:1px solid #dee2e6;border-top:2px solid #dee2e6"></div>
<div class="abs" style="left:21px;top:273px;width:1319px;height:52px;background:linear-gradient(#fff 0%,#fff 38%,#e2e2e2 100%)"></div>
<div class="abs" style="left:21px;top:325px;width:1319px;height:36px;background:#f2f2f2;border-bottom:1px solid #dee2e6"></div>
<div class="abs" style="left:21px;top:361px;width:1319px;height:36px;background:#fff;border-bottom:1px solid #dee2e6"></div>
<div class="abs" style="left:21px;top:397px;width:1319px;height:36px;background:#f2f2f2;border-bottom:1px solid #dee2e6"></div>
<div class="abs" style="left:21px;top:325px;width:1319px;height:1px;background:#dee2e6"></div>
<div class="vl" style="left:1339px;background:#e2e5e9"></div>
<div class="vl" style="left:310px"></div>
<div class="vl" style="left:434px"></div>
<div class="vl" style="left:541px"></div>
<div class="vl" style="left:638px"></div>
<div class="vl" style="left:734px"></div>
<div class="vl" style="left:816px"></div>
<div class="vl" style="left:906px"></div>
<div class="vl" style="left:973px"></div>
<div class="vl" style="left:1040px"></div>
<div class="vl" style="left:1141px"></div>
<div class="vl" style="left:1238px"></div>
<div class="th" style="left:107px;top:304px">地段位置或門牌</div>
<div class="th" style="left:321px;top:298px">社區簡稱</div>
<div class="th" style="left:445px;top:304px">總價<i>(</i>萬元<i>)</i></div>
<div class="th" style="left:550px;top:304px">交易日期</div>
<div class="th" style="left:648px;top:285px">單價</div>
<div class="th" style="left:647px;top:304px"><i>(</i>萬元<i>/</i>坪<i>)</i></div>
<div class="th" style="left:742px;top:292px">總面積</div>
<div class="th" style="left:751px;top:303px"><i>(</i>坪<i>)</i></div>
<div class="th" style="left:829px;top:292px">主建物</div>
<div class="th" style="left:825px;top:303px">佔比<i>(%)</i></div>
<div class="th" style="left:913px;top:304px">型態</div>
<div class="th" style="left:980px;top:304px">屋齡</div>
<div class="th" style="left:1049px;top:304px">樓別<i>/</i>樓高</div>
<div class="th" style="left:1150px;top:304px">主要用途</div>
<div class="th" style="left:1248px;top:304px">交易標的</div>
<svg class="abs" style="left:376px;top:293px" width="20" height="20" viewBox="0 0 20 20"><circle cx="10" cy="10" r="9.500" fill="#1c9be6"/><circle cx="10" cy="10" r="7.300" fill="none" stroke="#fff" stroke-width="1.300"/><text x="10" y="14.300" font-size="13" font-weight="bold" fill="#fff" text-anchor="middle" font-family="Liberation Sans,sans-serif">?</text></svg>
<svg class="abs" style="left:677px;top:280px" width="20" height="20" viewBox="0 0 20 20"><circle cx="10" cy="10" r="9.500" fill="#1c9be6"/><circle cx="10" cy="10" r="7.300" fill="none" stroke="#fff" stroke-width="1.300"/><text x="10" y="14.300" font-size="13" font-weight="bold" fill="#fff" text-anchor="middle" font-family="Liberation Sans,sans-serif">?</text></svg>
<svg class="abs" style="left:293px;top:298px" width="9" height="12" viewBox="0 0 8 12" preserveAspectRatio="none"><path d="M4 .2 8 5.300H0z" fill="#b8b8b8"/><path d="M4 11.800 0 6.700h8z" fill="#b8b8b8"/></svg>
<svg class="abs" style="left:417px;top:298px" width="9" height="12" viewBox="0 0 8 12" preserveAspectRatio="none"><path d="M4 .2 8 5.300H0z" fill="#b8b8b8"/><path d="M4 11.800 0 6.700h8z" fill="#b8b8b8"/></svg>
<svg class="abs" style="left:524px;top:298px" width="9" height="12" viewBox="0 0 8 12" preserveAspectRatio="none"><path d="M4 .2 8 5.300H0z" fill="#b8b8b8"/><path d="M4 11.800 0 6.700h8z" fill="#b8b8b8"/></svg>
<svg class="abs" style="left:620px;top:299px" width="9" height="12" viewBox="0 0 8 12" preserveAspectRatio="none"><path d="M4 .2 8 5.300H0z" fill="#b8b8b8"/><path d="M4 11.800 0 6.700h8z" fill="#111"/></svg>
<svg class="abs" style="left:716px;top:298px" width="9" height="12" viewBox="0 0 8 12" preserveAspectRatio="none"><path d="M4 .2 8 5.300H0z" fill="#b8b8b8"/><path d="M4 11.800 0 6.700h8z" fill="#b8b8b8"/></svg>
<svg class="abs" style="left:798px;top:298px" width="9" height="12" viewBox="0 0 8 12" preserveAspectRatio="none"><path d="M4 .2 8 5.300H0z" fill="#b8b8b8"/><path d="M4 11.800 0 6.700h8z" fill="#b8b8b8"/></svg>
<svg class="abs" style="left:888px;top:298px" width="9" height="12" viewBox="0 0 8 12" preserveAspectRatio="none"><path d="M4 .2 8 5.300H0z" fill="#b8b8b8"/><path d="M4 11.800 0 6.700h8z" fill="#b8b8b8"/></svg>
<svg class="abs" style="left:955px;top:298px" width="9" height="12" viewBox="0 0 8 12" preserveAspectRatio="none"><path d="M4 .2 8 5.300H0z" fill="#b8b8b8"/><path d="M4 11.800 0 6.700h8z" fill="#b8b8b8"/></svg>
<svg class="abs" style="left:1022px;top:298px" width="9" height="12" viewBox="0 0 8 12" preserveAspectRatio="none"><path d="M4 .2 8 5.300H0z" fill="#b8b8b8"/><path d="M4 11.800 0 6.700h8z" fill="#b8b8b8"/></svg>
<svg class="abs" style="left:1123px;top:298px" width="9" height="12" viewBox="0 0 8 12" preserveAspectRatio="none"><path d="M4 .2 8 5.300H0z" fill="#b8b8b8"/><path d="M4 11.800 0 6.700h8z" fill="#b8b8b8"/></svg>
<svg class="abs" style="left:1220px;top:298px" width="9" height="12" viewBox="0 0 8 12" preserveAspectRatio="none"><path d="M4 .2 8 5.300H0z" fill="#b8b8b8"/><path d="M4 11.800 0 6.700h8z" fill="#b8b8b8"/></svg>
<svg class="abs" style="left:1321px;top:298px" width="9" height="12" viewBox="0 0 8 12" preserveAspectRatio="none"><path d="M4 .2 8 5.300H0z" fill="#b8b8b8"/><path d="M4 11.800 0 6.700h8z" fill="#b8b8b8"/></svg>
<svg class="abs" style="left:23px;top:330.6px" width="22" height="22" viewBox="0 0 22 22"><circle cx="11" cy="11.300" r="9.700" fill="#000" opacity=".16"/><circle cx="11" cy="11" r="9" fill="#fff"/><circle cx="11" cy="11" r="6.700" fill="#68a83a"/><path d="M11 7v8M7 11h8" stroke="#fff" stroke-width="1.300"/></svg>
<div class="td" style="left:51px;top:337px;font-size:14.280px;letter-spacing:0;color:#a0623a">善化區中興路１９巷６號八樓之２</div>
<div class="td num" style="left:444px;top:335px">500<span class="bdg" style="background:#8a3fd6">車</span></div>
<div class="td num" style="left:551px;top:335px">114/10/21</div>
<div class="td num" style="left:648px;top:335px">16.02<span class="bdg" style="background:#8a3fd6">車</span></div>
<div class="td num" style="left:744px;top:335px">31.21</div>
<div class="td num" style="left:825px;top:335px">62.95</div>
<div class="td" style="left:915px;top:335px"><span class="bdg" style="background:#b76a4a;width:15px">華</span></div>
<div class="td num" style="left:983px;top:335px">1</div>
<div class="td" style="left:1050px;top:336px">八層/十層</div>
<div class="td" style="left:1151px;top:336px">住家用</div>
<div class="td" style="left:1248px;top:334px"><span class="bdg nb" style="background:#fb8305">土</span>1<span class="bdg nb" style="background:#0d960d;margin-left:5.500px">建</span>1<span class="bdg nb" style="background:#8a3fd6;margin-left:2px">車</span>1</div>
<svg class="abs" style="left:23px;top:366.6px" width="22" height="22" viewBox="0 0 22 22"><circle cx="11" cy="11.300" r="9.700" fill="#000" opacity=".16"/><circle cx="11" cy="11" r="9" fill="#fff"/><circle cx="11" cy="11" r="6.700" fill="#68a83a"/><path d="M11 7v8M7 11h8" stroke="#fff" stroke-width="1.300"/></svg>
<div class="td" style="left:51px;top:373px;font-size:14.280px;letter-spacing:0;color:#a0623a">善化區中興路１９巷６號十樓之５</div>
<div class="td num" style="left:444px;top:371px">1,290<span class="bdg" style="background:#8a3fd6">車</span></div>
<div class="td num" style="left:551px;top:371px">114/01/01</div>
<div class="td num" style="left:648px;top:371px">31.07<span class="bdg" style="background:#8a3fd6">車</span></div>
<div class="td num" style="left:744px;top:371px">41.52</div>
<div class="td num" style="left:825px;top:371px">63.18</div>
<div class="td" style="left:915px;top:371px"><span class="bdg" style="background:#b76a4a;width:15px">華</span></div>
<div class="td" style="left:1050px;top:372px">十層/十層</div>
<div class="td" style="left:1151px;top:372px">住家用</div>
<div class="td" style="left:1248px;top:370px"><span class="bdg nb" style="background:#fb8305">土</span>1<span class="bdg nb" style="background:#0d960d;margin-left:5.500px">建</span>1<span class="bdg nb" style="background:#8a3fd6;margin-left:2px">車</span>1</div>
<svg class="abs" style="left:23px;top:402.6px" width="22" height="22" viewBox="0 0 22 22"><circle cx="11" cy="11.300" r="9.700" fill="#000" opacity=".16"/><circle cx="11" cy="11" r="9" fill="#fff"/><circle cx="11" cy="11" r="6.700" fill="#68a83a"/><path d="M11 7v8M7 11h8" stroke="#fff" stroke-width="1.300"/></svg>
<div class="td" style="left:51px;top:409px;font-size:14.280px;letter-spacing:0;color:#a0623a">善化區中興路１９巷６號二樓之６</div>
<div class="td num" style="left:444px;top:407px">760<span class="bdg" style="background:#8a3fd6">車</span></div>
<div class="td num" style="left:551px;top:407px">113/11/15</div>
<div class="td num" style="left:648px;top:407px">24.1<span class="bdg" style="background:#8a3fd6">車</span></div>
<div class="td num" style="left:744px;top:407px">31.54</div>
<div class="td num" style="left:825px;top:407px">62.93</div>
<div class="td" style="left:915px;top:407px"><span class="bdg" style="background:#b76a4a;width:15px">華</span></div>
<div class="td" style="left:1050px;top:408px">二層/十層</div>
<div class="td" style="left:1151px;top:408px">住家用</div>
<div class="td" style="left:1248px;top:406px"><span class="bdg nb" style="background:#fb8305">土</span>1<span class="bdg nb" style="background:#0d960d;margin-left:5.500px">建</span>1<span class="bdg nb" style="background:#8a3fd6;margin-left:2px">車</span>1</div>

<div class="abs" style="left:20px;top:439px;width:1331px;height:34px;background:#ebebeb"></div>
<div class="t" style="left:30px;top:457.500px;font-size:12.800px;color:#222">顯示 1 至 3 筆 (查詢結果 : 3 筆)</div>
<div class="abs" style="left:0;top:497px;width:1366px;height:18px;background:#757575;border-top:5px solid #5c5c5c"></div>
<div class="abs" style="left:0;top:515px;width:1366px;height:34px;background:#e5d8c5"></div>
<div class="t" style="left:381px;top:524px;font-size:15.800px;color:#9a7b50">網站安全政策</div>
<div class="t" style="left:628px;top:524px;font-size:15.800px;color:#9a7b50">隱私權保護政策</div>
<div class="t" style="left:859px;top:524px;font-size:15.800px;color:#9a7b50">政府網站資料開放宣告</div>
<div class="t" style="left:428px;top:562px;font-size:14px;color:#777">©Copyright All Rights Reserved By 內 政 部 (Dept of Land Administration M. O. I. )</div>
<div class="abs" style="left:1366px;top:45px;width:20px;height:740px;box-shadow:0 0 13px rgba(0,0,0,.55)"></div>
<div class="abs" style="left:-20px;top:103px;width:20px;height:700px;box-shadow:0 0 5px rgba(0,0,0,.22)"></div>

</body>
</html>
